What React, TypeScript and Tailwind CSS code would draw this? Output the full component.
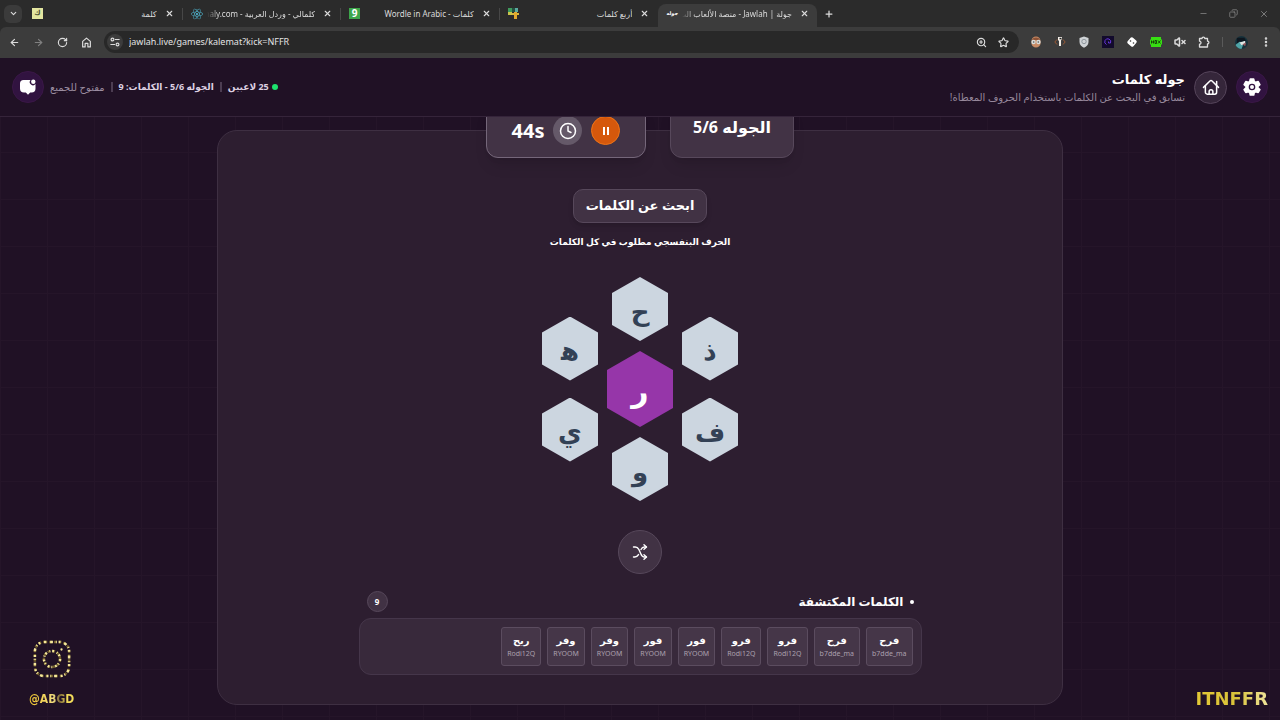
import React from "react";
import {
  ArrowLeft,
  ArrowRight,
  ChevronDown,
  Clock,
  Copy,
  EllipsisVertical,
  Minus,
  Plus,
  RotateCw,
  Star,
  VolumeX,
  X,
  ZoomIn,
} from "lucide-react";
import { FaReact } from "react-icons/fa";

const tabs = [
  { title: "كلمة", icon: "kalima" },
  { title: "كلمالي - وردل العربية - naly.com", icon: "react", fade: true },
  { title: "كلمات - Wordle in Arabic", icon: "wordle" },
  { title: "أربع كلمات", icon: "four" },
  { title: "جولة | Jawlah - منصة الألعاب الت", icon: "jawlah", fade: true, active: true },
];

const words = [
  { word: "فرح", player: "b7dde_ma" },
  { word: "فرح", player: "b7dde_ma" },
  { word: "فرو", player: "Rodi12Q" },
  { word: "فرو", player: "Rodi12Q" },
  { word: "فور", player: "RYOOM" },
  { word: "فور", player: "RYOOM" },
  { word: "وفر", player: "RYOOM" },
  { word: "وفر", player: "RYOOM" },
  { word: "ريح", player: "Rodi12Q" },
];

function TabIcon({ name }: { name: string }) {
  if (name === "react") return <FaReact className="h-3 w-3 shrink-0 text-[#4fb3cc]" />;
  if (name === "kalima")
    return (
      <span className="flex h-[11px] w-[11px] shrink-0 items-center justify-center bg-[#e3e6a0] text-[7px] font-bold text-[#4f5236]">
        ك
      </span>
    );
  if (name === "wordle")
    return (
      <span className="flex h-[11px] w-[11px] shrink-0 items-center justify-center bg-[#3da64b] text-[10px] font-bold text-white">
        9
      </span>
    );
  if (name === "four")
    return (
      <svg viewBox="0 0 11 11" className="h-[11px] w-[11px] shrink-0">
        <path d="M0 0h4v4H0z" fill="#3f9b5c" />
        <path d="M4 0h3v4H4z" fill="#24503f" />
        <path d="M7 0h3v4H7z" fill="#5aa9a0" />
        <path d="M0 4h4v3H0z" fill="#c9c44b" />
        <path d="M4 5h7v2H4z" fill="#d8b93a" />
        <path d="M6 4h3v7H6z" fill="#e0a92f" />
      </svg>
    );
  return <span className="shrink-0 text-[5px] font-bold text-white">جوله</span>;
}

function HomeIcon({ className }: { className?: string }) {
  return (
    <svg
      viewBox="0 0 24 24"
      className={className}
      fill="none"
      stroke="currentColor"
      strokeWidth="2"
      strokeLinecap="round"
      strokeLinejoin="round"
    >
      <path d="M2 12.5 10.6 4a2 2 0 0 1 2.8 0L22 12.5" />
      <path d="M4.500 10.500V19a2.500 2.500 0 0 0 2.500 2.500h10a2.500 2.500 0 0 0 2.500-2.500V4.500" />
      <path d="M9.500 21v-3a2.500 2.500 0 0 1 5 0v3" />
    </svg>
  );
}

function BrowserBar() {
  return (
    <div dir="ltr" className="bg-[#2b2b2b] text-[#dcdcdc]">
      <div className="flex h-[27px] items-center">
        <div className="flex w-6 shrink-0 pl-1">
          <button aria-label="Search tabs" className="flex h-[18px] w-[18px] items-center justify-center rounded-md bg-[#3b3b3b]">
            <ChevronDown className="h-[9px] w-[9px]" strokeWidth={3} />
          </button>
        </div>
        <div className="flex h-full w-[793px] shrink pt-1">
          {tabs.map((tab, i) => (
            <div
              key={tab.title}
              className={
                tab.active
                  ? "flex w-1/5 min-w-0 items-center gap-1 rounded-t-lg bg-[#3c3c3c] px-2 pb-1"
                  : "flex w-1/5 min-w-0 items-center gap-1 pb-1 pl-2"
              }
            >
              <TabIcon name={tab.icon} />
              <button
                dir="rtl"
                className={
                  tab.fade
                    ? "min-w-0 flex-1 overflow-hidden whitespace-nowrap text-start text-[8px] [mask-image:linear-gradient(to_right,transparent,black_12px)]"
                    : "min-w-0 flex-1 overflow-hidden whitespace-nowrap text-start text-[8px]"
                }
              >
                {tab.title}
              </button>
              <button aria-label="Close tab" className="ml-1 shrink-0">
                <X className="h-[9px] w-[9px]" strokeWidth={3} />
              </button>
              {!tab.active && (
                <span className={i === 3 ? "ml-1 h-3 w-px" : "ml-1 h-3 w-px bg-[#474747]"} />
              )}
            </div>
          ))}
        </div>
        <button aria-label="New tab" className="ml-[7px]">
          <Plus className="h-[10px] w-[10px]" strokeWidth={3} />
        </button>
        <div className="ml-auto flex items-center gap-[21px] pr-[11px] text-[#8a8a8a]">
          <button aria-label="Minimize">
            <Minus className="h-[9px] w-[9px]" />
          </button>
          <button aria-label="Restore">
            <Copy className="h-[9px] w-[9px] -scale-x-100" />
          </button>
          <button aria-label="Close window">
            <X className="h-[10px] w-[10px]" />
          </button>
        </div>
      </div>

      {/* Toolbar */}
      <div className="flex h-[31px] items-center rounded-t-md bg-[#3c3c3c] pb-px pl-[9px] pr-4">
        <div className="flex shrink-0 items-center gap-[13px]">
          <button aria-label="Back">
            <ArrowLeft className="h-[11px] w-[11px]" strokeWidth={2.5} />
          </button>
          <button aria-label="Forward" className="text-[#808080]">
            <ArrowRight className="h-[11px] w-[11px]" strokeWidth={2.5} />
          </button>
          <button aria-label="Reload">
            <RotateCw className="h-[11px] w-[11px]" strokeWidth={2.5} />
          </button>
          <button aria-label="Home">
            <svg viewBox="0 0 12 12" className="h-[11px] w-[11px]" fill="none" stroke="currentColor" strokeWidth="1.3">
              <path d="M1.800 4.800 6 1.200l4.200 3.600v6H7.500V7h-3v3.800H1.800z" strokeLinejoin="round" />
            </svg>
          </button>
        </div>
        <div className="ml-3 flex h-[22px] min-w-0 flex-1 items-center rounded-full bg-[#282828] pl-[3px] pr-[10px]">
          <button aria-label="Site information" className="flex h-4 w-4 items-center justify-center rounded-full bg-[#3c3c3c]">
            <svg viewBox="0 0 12 12" className="h-[10px] w-[10px]" fill="none" stroke="currentColor" strokeWidth="1.400">
              <circle cx="3" cy="3" r="1.700" />
              <path d="M6 3h5.500M.5 9H6" />
              <circle cx="9" cy="9" r="1.700" />
            </svg>
          </button>
          <input
            aria-label="Address"
            defaultValue="jawlah.live/games/kalemat?kick=NFFR"
            className="ml-[6px] min-w-0 flex-1 bg-transparent text-[9px] text-[#e3e3e3] outline-none"
          />
          <button aria-label="Zoom">
            <ZoomIn className="h-[11px] w-[11px]" strokeWidth={2.5} />
          </button>
          <button aria-label="Bookmark" className="ml-[11px]">
            <Star className="h-[11px] w-[11px]" strokeWidth={2.5} />
          </button>
        </div>
        <div className="ml-[11px] flex shrink-0 items-center gap-3">
          <button aria-label="Avatar extension">
            <svg viewBox="0 0 12 12" className="h-3 w-3">
              <path d="M1.500 5a4.500 4.500 0 0 1 9 0v2.500a4.500 4 0 0 1-9 0z" fill="#c98c66" />
              <path d="M2 4a4.200 3.500 0 0 1 8 0z" fill="#8d5236" />
              <circle cx="3.500" cy="6" r="2.200" fill="#d9dedc" />
              <circle cx="8.500" cy="6" r="2.200" fill="#d9dedc" />
              <circle cx="3.700" cy="6" r=".8" fill="#55504c" />
              <circle cx="8.300" cy="6" r=".8" fill="#55504c" />
            </svg>
          </button>
          <button aria-label="Code extension">
            <svg viewBox="0 0 12 12" className="h-3 w-3">
              <path d="M3 3.500.8 6 3 8.500M9 3.500 11.200 6 9 8.500" fill="none" stroke="#9b5a35" />
              <path d="M4 1h4v2L7 4.500V10H5V5L4 4z" fill="#f4efe8" />
              <path d="M5.500 1.800h2v1.500h-2z" fill="#222" />
            </svg>
          </button>
          <button aria-label="Shield extension">
            <svg viewBox="0 0 12 12" className="h-3 w-3">
              <path d="M6 .5 10.500 2v4c0 3-2 4.700-4.500 5.700C3.500 10.700 1.500 9 1.500 6V2z" fill="#cfd3d6" />
              <circle cx="6" cy="5.500" r="2.200" fill="none" stroke="#8f979d" />
            </svg>
          </button>
          <button aria-label="Spiral extension">
            <svg viewBox="0 0 12 12" className="h-3 w-3">
              <path d="M0 0h12v12H0z" fill="#120a2c" />
              <path d="M4.500 8.500A3 3 0 1 1 8.500 7H6.500V5.500" fill="none" stroke="#6536d8" strokeWidth="1" />
            </svg>
          </button>
          <button aria-label="Dice extension">
            <svg viewBox="0 0 12 12" className="h-3 w-3">
              <rect x="2.200" y="2.200" width="7.600" height="7.600" rx="1.500" fill="#fff" transform="rotate(40 6 6)" />
              <circle cx="4.500" cy="5" r=".8" fill="#333" />
              <circle cx="7.500" cy="7" r=".8" fill="#333" />
            </svg>
          </button>
          <button aria-label="Green extension">
            <svg viewBox="0 0 12 12" className="h-3 w-3">
              <path d="M1 1h10v10H1zM0 3.500h12v5H0z" fill="#37e012" />
              <path d="M1.500 4.500v3M3.500 4.500v3M1.500 6h2M5 4.500v3h1.500v-3zM8 4.500l2.500 3M10.500 4.500 8 7.500" fill="none" stroke="#123c08" strokeWidth=".9" />
            </svg>
          </button>
          <button aria-label="Mute">
            <VolumeX className="h-3 w-3" strokeWidth={3} />
          </button>
          <button aria-label="Extensions">
            <svg viewBox="0 0 12 12" className="h-3 w-3" fill="none" stroke="currentColor" strokeWidth="1.300" strokeLinejoin="round">
              <path d="M1.500 2.500H4a1.400 1.400 0 0 1 2.800 0h2.700v2.700a1.400 1.400 0 0 1 0 2.800v3h-8V8.200a1.500 1.500 0 0 0 0-3z" />
            </svg>
          </button>
          <span className="h-[10px] w-px bg-[#5a5a5a]" />
          <button aria-label="Profile" className="overflow-hidden rounded-full">
            <svg viewBox="0 0 14 14" className="h-[13px] w-[13px]">
              <path d="M0 0h14v14H0z" fill="#16323c" />
              <path d="M0 10 5 6l4 3-2 5H0z" fill="#4fa3a6" />
              <path d="m5 7 6-2v3L7 10z" fill="#dfe6e4" />
              <path d="M2 2h8l2 3-7 1-3 2z" fill="#0d161f" />
              <path d="m8 9 4-2-1 4z" fill="#93555a" />
            </svg>
          </button>
        </div>
        <button aria-label="Menu" className="-mr-2 ml-3">
          <EllipsisVertical className="h-3 w-3" strokeWidth={3} />
        </button>
      </div>
    </div>
  );
}

function GameHeader() {
  return (
    <header className="flex h-[59px] items-center justify-between border-b border-[#35243a] bg-[#201125] px-3">
      <div className="flex items-center gap-[9px]">
        <button aria-label="الإعدادات" className="flex h-8 w-8 items-center justify-center rounded-full border border-[#3a1747] bg-[#311340] text-white">
          <svg viewBox="0 0 24 24" className="h-5 w-5">
            <path
              fill="currentColor"
              stroke="currentColor"
              strokeWidth="2"
              strokeLinejoin="round"
              d="M10 2.500h4l.7 3 1.700 1 3-.9 2 3.500-2.300 2.100v1.700l2.300 2.100-2 3.500-3-.9-1.700 1-.7 3h-4l-.7-3-1.700-1-3 .9-2-3.500 2.300-2.100v-1.700L2.600 9.100l2-3.500 3 .9 1.700-1z"
            />
            <circle cx="12" cy="12" r="3.200" fill="#fff" stroke="#311340" strokeWidth="1.600" />
          </svg>
        </button>
        <a href="#home" aria-label="الرئيسية" className="flex h-[33px] w-[33px] items-center justify-center rounded-full border border-[#55445a] bg-[#35263a] text-white">
          <HomeIcon className="h-[18px] w-[18px]" />
        </a>
        <div>
          <h1 className="text-[13px] leading-5 font-bold text-white">جوله كلمات</h1>
          <p className="text-[10px] leading-4 text-[#96889b]">تسابق في البحث عن الكلمات باستخدام الحروف المعطاة!</p>
        </div>
      </div>
      <div className="flex items-center gap-[6px] text-[9px] font-bold text-[#ddd0e1]">
        <span className="flex items-center gap-[3px]">
          <span className="h-[6px] w-[6px] rounded-full bg-[#1de26e]" />
          <span>25 لاعبين</span>
        </span>
        <span className="h-[10px] w-[2px] bg-[#4c3d52]" />
        <span>الجوله 5/6 - الكلمات: 9</span>
        <span className="h-[10px] w-[2px] bg-[#4c3d52]" />
        <span className="text-[10px] font-normal text-[#9c8ea1]">مفتوح للجميع</span>
        <button aria-label="المحادثة" className="flex h-8 w-8 items-center justify-center rounded-full border border-[#3a1747] bg-[#311340]">
          <svg viewBox="0 0 18 18" className="h-[18px] w-[18px]">
            <path
              d="M4.500 2h7a3.200 3.200 0 0 0 5 4v4.500a4 4 0 0 1-4 4h-1.300L9 16.700l-2.200-2.200H5a4 4 0 0 1-4-4V5.500A3.500 3.500 0 0 1 4.500 2z"
              fill="#fff"
            />
            <circle cx="14.300" cy="3.700" r="2.200" fill="#fff" />
          </svg>
        </button>
      </div>
    </header>
  );
}

function Hex({ letter, center }: { letter: string; center?: boolean }) {
  return (
    <button
      className={
        center
          ? "flex h-[76px] w-[66px] items-center justify-center bg-[#9636a9] pt-1 text-3xl font-bold text-white [clip-path:polygon(50%_0,100%_25%,100%_75%,50%_100%,0_75%,0_25%)]"
          : "flex h-16 w-14 items-center justify-center bg-[#ccd6e0] pt-1 text-[26px] font-bold text-[#334155] [clip-path:polygon(50%_0,100%_25%,100%_75%,50%_100%,0_75%,0_25%)]"
      }
    >
      {letter}
    </button>
  );
}

export default function App() {
  return (
    <div
      dir="rtl"
      className="relative flex min-h-screen flex-col overflow-hidden bg-[#201125] font-['Noto_Sans','DejaVu_Sans',sans-serif]"
    >
      <BrowserBar />
      <GameHeader />

      <main className="flex flex-1 flex-col items-center overflow-hidden bg-[linear-gradient(#251529_1px,transparent_1px),linear-gradient(90deg,#251529_1px,transparent_1px)] bg-[size:47px_47px] bg-[position:0_35px] px-4 pb-4">
        {/* Status cards, scrolled partly under the header */}
        <div className="relative z-10 -mt-[14px] flex gap-6">
          <div className="flex h-[55px] w-[124px] justify-center rounded-xl border border-[#57485b] bg-[#423345] pt-[11px] text-base font-bold text-white shadow-lg">
            الجوله 5/6
          </div>
          <div className="flex h-[55px] w-[160px] items-center justify-center gap-[9px] rounded-xl border border-[#75677a] bg-[#423345] text-white shadow-lg">
            <button aria-label="إيقاف مؤقت" className="flex h-[29px] w-[29px] items-center justify-center rounded-full border border-[#ee7418] bg-[#d5580c]">
              <svg viewBox="0 0 8 8" className="h-2 w-2">
                <path d="M1 0h2v8H1zM5 0h2v8H5z" fill="#fff" />
              </svg>
            </button>
            <span className="flex h-[29px] w-[29px] items-center justify-center rounded-full bg-[#655969]">
              <Clock className="h-[18px] w-[18px]" />
            </span>
            <span dir="ltr" className="text-xl font-bold">44s</span>
          </div>
        </div>

        <section className="-mt-7 flex w-full max-w-[846px] flex-col items-center rounded-[20px] border border-[#3e2f42] bg-[#2d1e30] px-4 pt-[58px] pb-[29px]">
          <h2 className="flex h-[34px] items-center rounded-[10px] border border-[#57485b] bg-[#413244] px-3 text-[13px] font-bold text-white shadow-md">
            ابحث عن الكلمات
          </h2>
          <p className="mt-[11px] text-[9px] leading-4 font-bold text-white">الحرف البنفسجي مطلوب في كل الكلمات</p>

          <div className="mt-[27px] flex items-center gap-[9px]">
            <div className="flex flex-col gap-[17px]">
              <Hex letter="ذ" />
              <Hex letter="ف" />
            </div>
            <div className="flex flex-col items-center gap-[10px]">
              <Hex letter="ح" />
              <Hex letter="ر" center />
              <Hex letter="و" />
            </div>
            <div className="flex flex-col gap-[17px]">
              {/* the joiner keeps the initial form of heh */}
              <Hex letter={"ه\u200d"} />
              <Hex letter="ي" />
            </div>
          </div>

          <button aria-label="خلط الحروف" className="mt-[29px] flex h-11 w-11 items-center justify-center rounded-full border border-[#57485b] bg-[#413244] text-white">
            <svg
              viewBox="0 0 16 16"
              className="h-4 w-4"
              fill="none"
              stroke="currentColor"
              strokeWidth="1.400"
              strokeLinecap="round"
              strokeLinejoin="round"
            >
              <path d="M1.500 3h1.700c1.800 0 2.900 1 3.800 2.700l1.800 4C9.600 11.700 10.600 13 12.400 13h1.800" />
              <path d="M1.500 13h1.300c1.700 0 2.800-.9 3.700-2.400M9 5.500C9.700 4 10.700 3 12.400 3h1.800" />
              <path d="m12 .800 2.500 2.200L12 5.200M12 10.800l2.500 2.200-2.500 2.200" />
            </svg>
          </button>

          <div className="mt-[17px] w-full max-w-[563px]">
            <div className="flex h-[21px] items-center justify-between px-2">
              <h3 className="flex items-center gap-[6px] text-xs font-bold text-white">
                <span className="h-1 w-1 rounded-full bg-white" />
                الكلمات المكتشفة
              </h3>
              <span className="flex h-[21px] w-[21px] items-center justify-center rounded-full border border-[#57485b] bg-[#413244] text-[8px] font-bold text-white">
                9
              </span>
            </div>
            <ul className="mt-[6px] flex flex-wrap gap-[6px] rounded-xl border border-[#45364a] bg-[#38293b] p-2">
              {words.map((item, i) => (
                <li
                  key={i}
                  className="flex flex-col items-center rounded-[3px] border border-[#5b4c5f] bg-[#453648] px-[5px] pt-1 pb-[5px]"
                >
                  <span className="text-[10px] leading-4 font-bold text-white">{item.word}</span>
                  <span className="text-[7px] leading-3 text-[#aba0ae]">{item.player}</span>
                </li>
              ))}
            </ul>
          </div>
        </section>
      </main>

      {/* Stream overlay handles */}
      <div dir="ltr" className="absolute bottom-3 left-[29px] flex flex-col items-center gap-[11px]">
        <svg viewBox="0 0 40 40" className="h-[38px] w-[38px]" fill="none" strokeWidth="2.600">
          <rect x="2" y="2" width="36" height="36" rx="10" stroke="#6f5c2a" strokeDasharray="3 2" />
          <rect x="2" y="2" width="36" height="36" rx="10" stroke="#f5e89a" strokeDasharray="2 4 3 3 1 2" />
          <circle cx="20" cy="20" r="8.500" stroke="#6f5c2a" strokeDasharray="3 2" />
          <circle cx="20" cy="20" r="8.500" stroke="#f5e89a" strokeDasharray="2 3 1 2" />
          <circle cx="30" cy="10" r="1.200" fill="#f5e89a" />
        </svg>
        <span className="bg-[linear-gradient(90deg,#f4c92c,#f0dc7e_55%,#7e6a35_68%,#f3dc5a_85%)] bg-clip-text font-['Liberation_Sans_Narrow','DejaVu_Sans_Condensed',sans-serif] text-xs leading-5 font-bold text-transparent">
          @ABGD
        </span>
      </div>
      <span
        dir="ltr"
        className="absolute right-3 bottom-3 bg-[linear-gradient(90deg,#e3c936,#d9c23a_55%,#efe49a)] bg-clip-text font-['DejaVu_Sans',sans-serif] text-lg leading-5 font-bold text-transparent"
      >
        ITNFFR
      </span>
    </div>
  );
}
